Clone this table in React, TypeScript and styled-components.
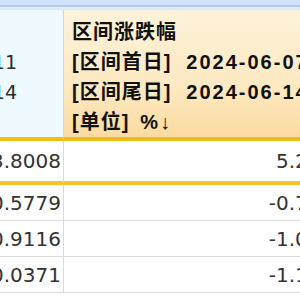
import React from "react";
import styled, { createGlobalStyle } from "styled-components";

const GlobalStyle = createGlobalStyle`
  html, body {
    margin: 0;
    padding: 0;
    background: #ffffff;
  }
  body {
    width: 300px;
    height: 300px;
    overflow: hidden;
  }
`;

const content = {
  leftHead: ["", "2024-06-11", "2024-06-14", ""],
  title: "区间涨跌幅",
  params: [
    { tag: "[区间首日]", value: "2024-06-07", gap: 15 },
    { tag: "[区间尾日]", value: "2024-06-14", gap: 15 },
    { tag: "[单位]", value: "%↓", gap: 11 },
  ],
  rows: [
    { base: "13.8008", change: "5.2136", selected: true },
    { base: "10.5779", change: "-0.7395", selected: false },
    { base: "10.9116", change: "-1.0482", selected: false },
    { base: "10.0371", change: "-1.1927", selected: false },
  ],
};

const App = () => {
  return (
    <>
      <GlobalStyle />
      <Frame>
        <TopBar />
        <Table>
          <LeftHead>
            {content.leftHead.map((line, i) => (
              <SideLine key={i}>{line}</SideLine>
            ))}
          </LeftHead>
          <RightHead>
            <HeadLine>{content.title}</HeadLine>
            {content.params.map((p) => (
              <HeadLine key={p.tag}>
                {p.tag}
                <ParamValue $gap={p.gap}>{p.value}</ParamValue>
              </HeadLine>
            ))}
          </RightHead>
          {content.rows.map((row, i) => (
            <React.Fragment key={i}>
              <Cell $selected={row.selected} $first={i === 0} $divider>
                {row.base}
              </Cell>
              <Cell $selected={row.selected} $first={i === 0}>
                {row.change}
              </Cell>
            </React.Fragment>
          ))}
        </Table>
      </Frame>
    </>
  );
};

const Frame = styled.div`
  width: 300px;
  height: 300px;
  overflow: hidden;
  background: #ffffff;
`;

const TopBar = styled.div`
  height: 5px;
  background: #cfe0f9;
  border-bottom: 2px solid #b7cce6;
  box-shadow: 0 3px 0 #dcebf3;
  margin-bottom: 3px;
`;

const Table = styled.div`
  display: grid;
  grid-template-columns: 64px 286px;
`;

const LeftHead = styled.div`
  background: #eefaff;
  border-right: 1px solid #c9d8e6;
  padding-top: 7px;
  border-bottom: 4px solid #f6bb17;
  overflow: hidden;
`;

const RightHead = styled.div`
  background: linear-gradient(180deg, #fdf3da 0%, #fde9c2 60%, #fcdba0 100%);
  padding: 7px 0 0 8px;
  border-bottom: 4px solid #f6bb17;
  overflow: hidden;
`;

const SideLine = styled.div`
  height: 30px;
  line-height: 30px;
  white-space: nowrap;
  display: flex;
  justify-content: flex-end;
  padding-right: 46px;
  font-family: "DejaVu Sans", sans-serif;
  font-size: 19px;
  color: #2b2b2b;
`;

const HeadLine = styled.div`
  height: 30px;
  line-height: 30px;
  white-space: nowrap;
  font-family: "Liberation Sans", "Noto Sans CJK SC", sans-serif;
  font-size: 20px;
  font-weight: 700;
  letter-spacing: 1px;
  color: #111111;
`;

const ParamValue = styled.span<{ $gap: number }>`
  margin-left: ${(p) => p.$gap}px;
  letter-spacing: 2px;
`;

const Cell = styled.div<{ $selected?: boolean; $first?: boolean; $divider?: boolean }>`
  height: ${(p) => (p.$first ? "40px" : "35px")};
  display: flex;
  align-items: center;
  justify-content: flex-end;
  white-space: nowrap;
  padding-right: ${(p) => (p.$divider ? "2px" : "4px")};
  font-family: "DejaVu Sans", "Liberation Sans", sans-serif;
  font-size: 20px;
  color: #333333;
  background: #ffffff;
  border-right: ${(p) => (p.$divider ? "1px solid #dadada" : "0")};
  border-bottom: ${(p) => (p.$selected ? "4px solid #f7c22a" : "1px solid #dcdcdc")};
  overflow: hidden;
`;

export default App;
